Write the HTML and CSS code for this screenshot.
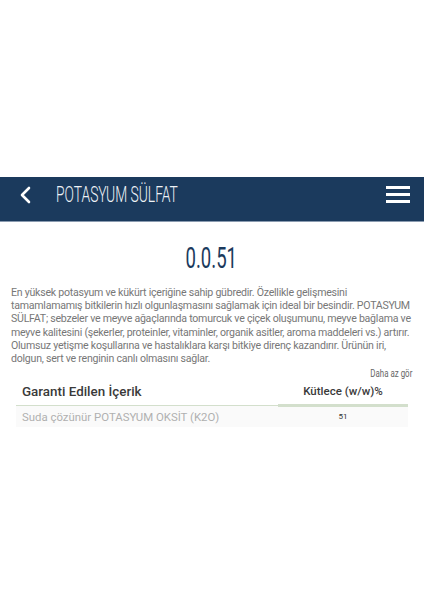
FILE: index.html
```html
<!DOCTYPE html>
<html lang="tr">
  <head>
    <meta charset="UTF-8" />
    <meta name="viewport" content="width=device-width, initial-scale=1.0" />
    <title>Potasyum Sülfat</title>
    <link rel="stylesheet" href="styles.css">
  </head>
  <body>
    <div class="page">
      <header class="topbar">
        <a class="back" href="#">
          <svg width="12" height="18" viewBox="0 0 12 18">
            <path d="M10 2 L3 9 L10 16" fill="none" stroke="#fff" stroke-width="2.6" stroke-linecap="round" stroke-linejoin="round" />
          </svg>
        </a>
        <h1 class="title"><span class="narrow">POTASYUM SÜLFAT</span></h1>
        <button class="menu" type="button">
          <span></span><span></span><span></span>
        </button>
      </header>

      <main class="content">
        <h2 class="code"><span class="narrow">0.0.51</span></h2>
        <p class="desc">
          En yüksek potasyum ve kükürt içeriğine sahip gübredir. Özellikle gelişmesini<br>
          tamamlamamış bitkilerin hızlı olgunlaşmasını sağlamak için ideal bir besindir. POTASYUM<br>
          SÜLFAT; sebzeler ve meyve ağaçlarında tomurcuk ve çiçek oluşumunu, meyve bağlama ve<br>
          meyve kalitesini (şekerler, proteinler, vitaminler, organik asitler, aroma maddeleri vs.) artırır.<br>
          Olumsuz yetişme koşullarına ve hastalıklara karşı bitkiye direnç kazandırır. Ürünün iri,<br>
          dolgun, sert ve renginin canlı olmasını sağlar.
        </p>
        <div class="more"><a class="narrow" href="#">Daha az gör</a></div>

        <table class="spec">
          <thead>
            <tr>
              <th class="col-name">Garanti Edilen İçerik</th>
              <th class="col-val">Kütlece (w/w)%</th>
            </tr>
          </thead>
          <tbody>
            <tr>
              <td class="col-name">Suda çözünür POTASYUM OKSİT (K2O)</td>
              <td class="col-val">51</td>
            </tr>
          </tbody>
        </table>
      </main>
    </div>
  </body>
</html>
```

FILE: styles.css
```css
:root {
  --navy: #1b3a5d;
  --text: #777;
  --line: #d3dfcc;
}

body {
  margin: 0;
  background: #fff;
  font-family: Roboto, "Noto Sans", sans-serif;
}

.page {
  padding-top: 177px;
}

/* no condensed face installed, so squeeze horizontally */
.narrow {
  display: inline-block;
  white-space: nowrap;
}

.topbar {
  height: 44px;
  background: var(--navy);
  border-bottom: 1px solid #8a9bb0;
  display: flex;
  align-items: center;
  padding: 0 14px 0 19px;
}

.back {
  display: flex;
  width: 12px;
  margin-top: -8px;
}

.title {
  margin: -9px 0 0 25px;
  flex: 1;
  color: #eef2f6;
  font-weight: 300;
  font-size: 22px;
  line-height: 26px;
}

.title .narrow {
  transform: scaleX(0.63);
  transform-origin: left center;
}

.menu {
  background: none;
  border: 0;
  padding: 0;
  width: 24px;
  display: flex;
  flex-direction: column;
  gap: 4px;
  margin-top: -10px;
}

.menu span {
  display: block;
  height: 3px;
  background: #fff;
}

.content {
  padding: 0 12px 0 11px;
}

.code {
  margin: 19px 0 0;
  text-align: center;
  color: var(--navy);
  font-weight: 400;
  font-size: 29px;
  line-height: 34px;
}

.code .narrow {
  transform: scaleX(0.64);
  transform-origin: center;
}

.desc {
  margin: 11px 0 0;
  color: var(--text);
  font-size: 10.6px;
  letter-spacing: -0.25px;
  line-height: 13.2px;
  white-space: nowrap;
}

.more {
  text-align: right;
  line-height: 13px;
}

.more a {
  color: #666;
  text-decoration: none;
  font-size: 11px;
  transform: scaleX(0.72);
  transform-origin: right center;
}

.spec {
  width: 392px;
  margin: 0 0 0 5px;
  border-collapse: collapse;
}

.spec th {
  color: #3a3a3a;
  font-weight: 500;
  line-height: 16px;
  padding: 3px 6px 5px;
}

.spec thead .col-name {
  text-align: left;
  font-size: 13.4px;
  border-bottom: 1px solid var(--line);
}

.spec thead .col-val {
  width: 118px;
  font-size: 11.5px;
  border-bottom: 3px solid var(--line);
}

.spec td {
  padding: 3px 6px 3px;
  line-height: 14px;
  background: #fafafa;
}

.spec tbody .col-name {
  color: #b0b0b0;
  font-size: 11.4px;
}

.spec tbody .col-val {
  text-align: center;
  color: #333;
  font-size: 8px;
}
```
